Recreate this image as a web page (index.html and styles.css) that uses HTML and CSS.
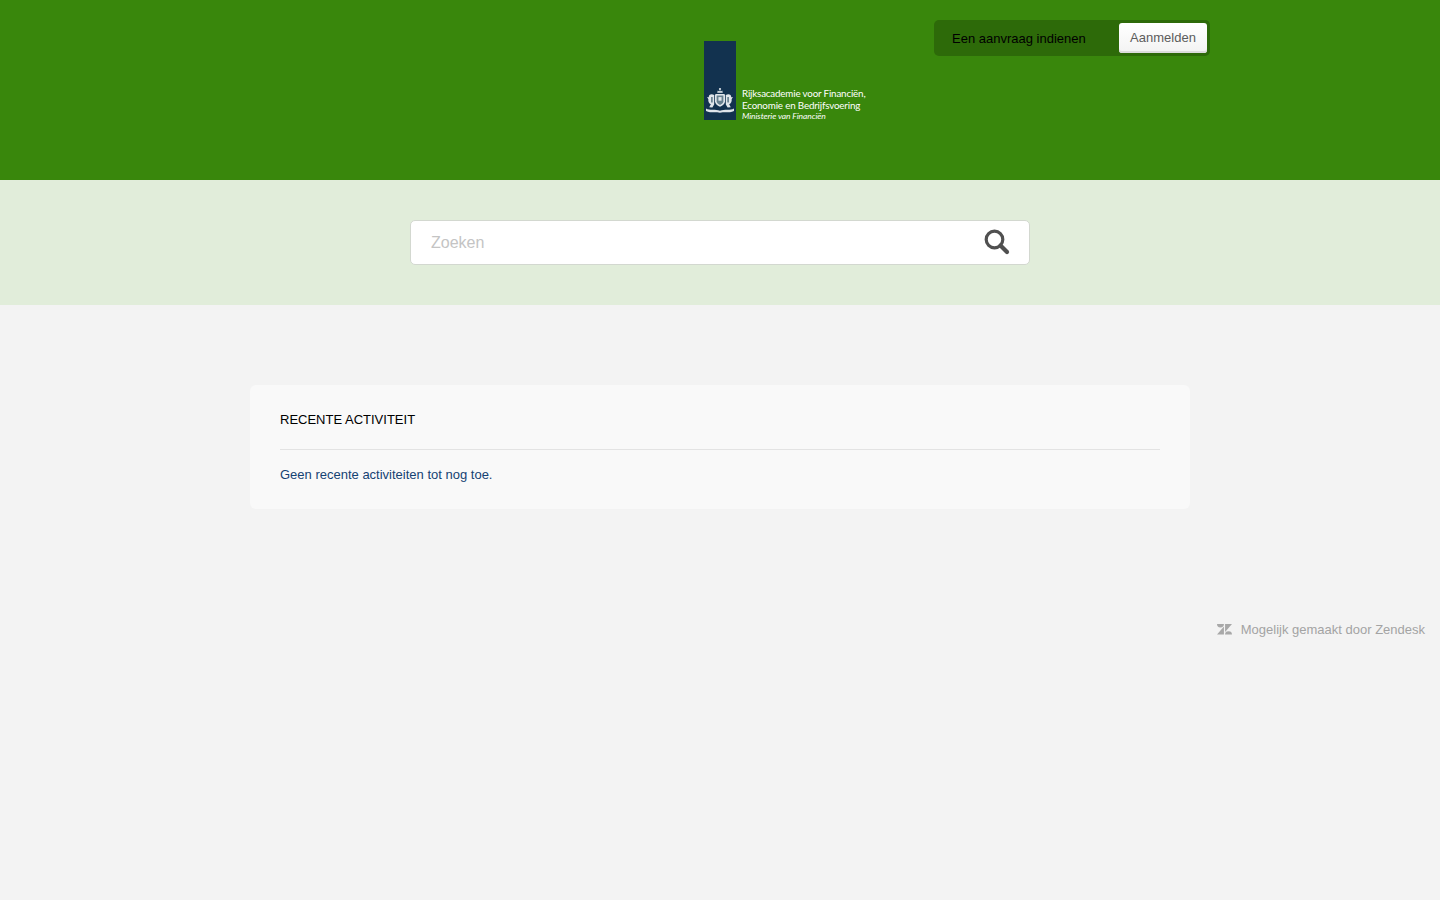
FILE: index.html
```html
<!DOCTYPE html>
<html lang="nl">
<head>
<meta charset="utf-8">
<title>Rijksacademie voor Financiën</title>
<link rel="stylesheet" href="styles.css">
</head>
<body>
<header class="header">
  <a class="logo" href="#">
    <span class="logo-bar">
      <svg class="arms" viewBox="1.500 1.400 25 23.600" width="28" height="25" preserveAspectRatio="none" aria-hidden="true">
        <g fill="#dfe5ea">
          <path d="M11.500 6 L12 3.800 L13.200 4.800 L14 3.400 L14.800 4.800 L16 3.800 L16.500 6 Z"/>
          <circle cx="14" cy="2.400" r="1"/>
          <path d="M10 7 H18 L18.500 8.500 V14 C18.500 16.500 16.500 18 14 19.200 C11.500 18 9.500 16.500 9.500 14 V8.500 Z"/>
          <path d="M8.800 8 C6 6.500 3.800 8 4 10.200 L2.500 10 L3.600 12 C3.200 14 4.200 16.200 5.800 16.800 L4.400 19.600 L7.200 19.800 L8.800 17 Z"/>
          <path d="M19.200 8 C22 6.500 24.200 8 24 10.200 L25.500 10 L24.400 12 C24.800 14 23.800 16.200 22.200 16.800 L23.600 19.600 L20.800 19.800 L19.200 17 Z"/>
          <path d="M1.500 20.800 C5 23 9 21 14 22.800 C19 21 23 23 26.500 20.800 L26.500 23 C22 25.200 18 23.500 14 24.800 C10 23.500 6 25.200 1.500 23 Z"/>
        </g>
        <path d="M11 8.500 H17 V14 C17 15.800 15.500 16.800 14 17.500 C12.500 16.800 11 15.800 11 14 Z" fill="#66808f"/>
        <path d="M12.600 10 H15.400 V13.400 H12.600 Z" fill="#dfe5ea"/>
        <path d="M6 10 L7.500 10 L7.500 15 L6 15 Z M20.500 10 L22 10 L22 15 L20.500 15 Z" fill="#66808f"/>
      </svg>
    </span>
    <span class="logo-text">
      <span class="logo-line">Rijksacademie voor Financiën,</span>
      <span class="logo-line">Economie en Bedrijfsvoering</span>
      <span class="logo-line logo-italic">Ministerie van Financiën</span>
    </span>
  </a>
  <nav class="user-nav">
    <a class="request-link" href="#">Een aanvraag indienen</a>
    <a class="login" href="#">Aanmelden</a>
  </nav>
</header>
<section class="search-band">
  <form class="search">
    <input class="search-input" type="text" placeholder="Zoeken">
    <svg class="search-icon" viewBox="0 0 26 26" width="26" height="26" aria-hidden="true">
      <circle cx="10.500" cy="10.500" r="8.300" fill="none" stroke="#505050" stroke-width="3.200"/>
      <path d="M16.500 16.500 L23 23" fill="none" stroke="#505050" stroke-width="4.200" stroke-linecap="round"/>
    </svg>
  </form>
</section>
<main class="main">
  <section class="card">
    <h2 class="card-title">RECENTE ACTIVITEIT</h2>
    <p class="card-text">Geen recente activiteiten tot nog toe.</p>
  </section>
</main>
<footer class="footer">
  <a class="powered" href="#">
    <svg class="zendesk" viewBox="0 0 16 12" width="15" height="11" preserveAspectRatio="none" aria-hidden="true">
      <path d="M0 0 H7.400 A3.700 3.700 0 0 1 0 0 Z" fill="#a8a8a8"/>
      <path d="M7.400 2.800 V11.500 H0 Z" fill="#a8a8a8"/>
      <path d="M8.600 0 H16 L8.600 8.800 Z" fill="#a8a8a8"/>
      <path d="M8.600 11.500 A3.700 3.700 0 0 1 16 11.500 Z" fill="#a8a8a8"/>
    </svg>
    <span>Mogelijk gemaakt door Zendesk</span>
  </a>
</footer>
</body>
</html>
```

FILE: styles.css
```css
* {
  box-sizing: border-box;
}

html,
body {
  height: 100%;
}

body {
  margin: 0;
  background: #f3f3f3;
  font-family: "Liberation Sans", Arial, sans-serif;
  font-size: 13px;
  color: #000;
}

a {
  text-decoration: none;
}

.header {
  display: flex;
  align-items: flex-start;
  height: 180px;
  padding-left: 704px;
  background: #39870c;
}

.logo {
  display: flex;
  align-items: flex-start;
  width: 163px;
  height: 83px;
  margin-top: 41px;
  color: #fff;
}

.logo-bar {
  display: flex;
  align-items: flex-end;
  justify-content: center;
  flex: none;
  width: 32px;
  height: 79px;
  padding-bottom: 7px;
  background: #12324f;
}

.arms {
  display: block;
  flex: none;
}

.logo-text {
  display: flex;
  flex-direction: column;
  flex: none;
  margin-top: 47px;
  margin-left: 6px;
  font-family: "Lato", "Noto Sans", sans-serif;
  font-size: 9.800px;
  line-height: 11.500px;
  letter-spacing: -0.170px;
  white-space: nowrap;
}

.logo-line {
  display: block;
}

.logo-italic {
  font-style: italic;
  font-size: 8.500px;
  letter-spacing: -0.080px;
}

.user-nav {
  display: flex;
  align-items: center;
  justify-content: space-between;
  width: 276px;
  height: 36px;
  margin-top: 20px;
  margin-left: 67px;
  padding: 0 3px 0 18px;
  border-radius: 5px;
  background: #2d6a09;
}

.request-link {
  color: #000;
  font-size: 13px;
}

.login {
  display: flex;
  align-items: center;
  justify-content: center;
  width: 88px;
  height: 30px;
  padding-bottom: 2px;
  border-radius: 3px;
  background: linear-gradient(#fff, #f3f3f3);
  box-shadow: inset 0 -2px 0 #dcdcdc;
  color: #5c5c5c;
  font-size: 13px;
}

.search-band {
  display: flex;
  justify-content: center;
  height: 125px;
  padding-top: 40px;
  background: #e1edda;
}

.search {
  display: flex;
  align-items: center;
  justify-content: space-between;
  width: 620px;
  height: 45px;
  padding: 0 19px 2px 20px;
  border: 1px solid #d3d8d0;
  border-radius: 5px;
  background: #fff;
}

.search-input {
  flex: 1;
  min-width: 0;
  padding: 2px 0 0;
  border: 0;
  outline: 0;
  background: transparent;
  font-family: "Liberation Sans", Arial, sans-serif;
  font-size: 16px;
  color: #333;
}

.search-input::placeholder {
  color: #c4c4c4;
  opacity: 1;
}

.search-icon {
  display: block;
  flex: none;
}

.main {
  display: flex;
  justify-content: center;
  padding-top: 80px;
}

.card {
  width: 940px;
  height: 124px;
  padding: 0 30px;
  border-radius: 6px;
  background: #f9f9f9;
}

.card-title {
  height: 65px;
  margin: 0;
  padding-top: 27px;
  border-bottom: 1px solid #e3e3e3;
  font-size: 13px;
  font-weight: 400;
  line-height: 15px;
  color: #000;
}

.card-text {
  margin: 0;
  padding-top: 17px;
  font-size: 13px;
  line-height: 15px;
  color: #154273;
}

.footer {
  display: flex;
  justify-content: flex-end;
  padding: 112px 15px 0 0;
}

.powered {
  display: flex;
  align-items: center;
  gap: 9px;
  height: 16px;
  color: #a3a3a3;
  font-size: 13px;
}

.zendesk {
  display: block;
  flex: none;
  margin-top: 1px;
}
```
